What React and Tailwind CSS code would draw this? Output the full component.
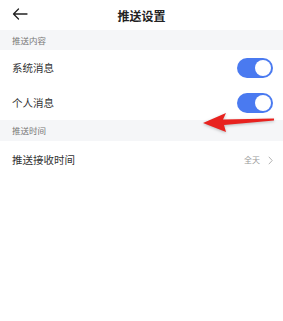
import React from 'react';

const Toggle = () => (
  <div className="w-[36px] h-[20px] rounded-full bg-[#4a7af0] flex items-center justify-end pr-[2px]">
    <div className="w-[16px] h-[16px] rounded-full bg-white"></div>
  </div>
);

const App = () => {
  return (
    <div
      className="w-[283px] h-[321px] bg-white relative overflow-hidden"
      style={{ fontFamily: '"Noto Sans CJK SC", "Noto Sans", sans-serif' }}
    >
      <div className="h-[30px] flex items-center relative">
        <svg className="absolute left-[12px] top-[8px]" width="16" height="12" viewBox="0 0 16 12" fill="none">
          <path d="M15 6H1.5M6.5 1L1.5 6l5 5" stroke="#222" strokeWidth="1.3" strokeLinecap="round" strokeLinejoin="round" />
        </svg>
        <div className="flex-1 text-center text-[12px] font-semibold text-[#222] pt-[1px]">推送设置</div>
      </div>

      <div className="h-[20px] bg-[#f5f6f8] flex items-center px-[12px] text-[8.5px] text-[#777]">推送内容</div>
      <div className="h-[36px] flex items-center justify-between pl-[12px] pr-[10px]">
        <span className="text-[10.5px] text-[#333]">系统消息</span>
        <Toggle />
      </div>
      <div className="h-[34px] flex items-center justify-between pl-[12px] pr-[10px]">
        <span className="text-[10.5px] text-[#333]">个人消息</span>
        <Toggle />
      </div>
      <div className="h-[21px] bg-[#f5f6f8] flex items-center px-[12px] text-[8.5px] text-[#777]">推送时间</div>
      <div className="h-[38px] flex items-center justify-between pl-[12px] pr-[10px]">
        <span className="text-[10.5px] text-[#333]">推送接收时间</span>
        <div className="flex items-center gap-[8px] text-[8px] text-[#999]">
          <span>全天</span>
          <svg width="5" height="9" viewBox="0 0 5 9" fill="none">
            <path d="M0.8 0.8L4.2 4.5L0.8 8.2" stroke="#aaa" strokeWidth="0.9" />
          </svg>
        </div>
      </div>

      {/* red annotation arrow */}
      <svg className="absolute left-[198px] top-[108px]" width="82" height="30" viewBox="0 0 82 30" style={{ filter: 'drop-shadow(0 1px 1.5px rgba(0,0,0,0.25))' }}>
        <path d="M5 15 L28 5 L25 11.5 L76 10.5 L76 12.5 L26 17 L28 24 Z" fill="#e8221f" />
      </svg>
    </div>
  );
};

export default App;
